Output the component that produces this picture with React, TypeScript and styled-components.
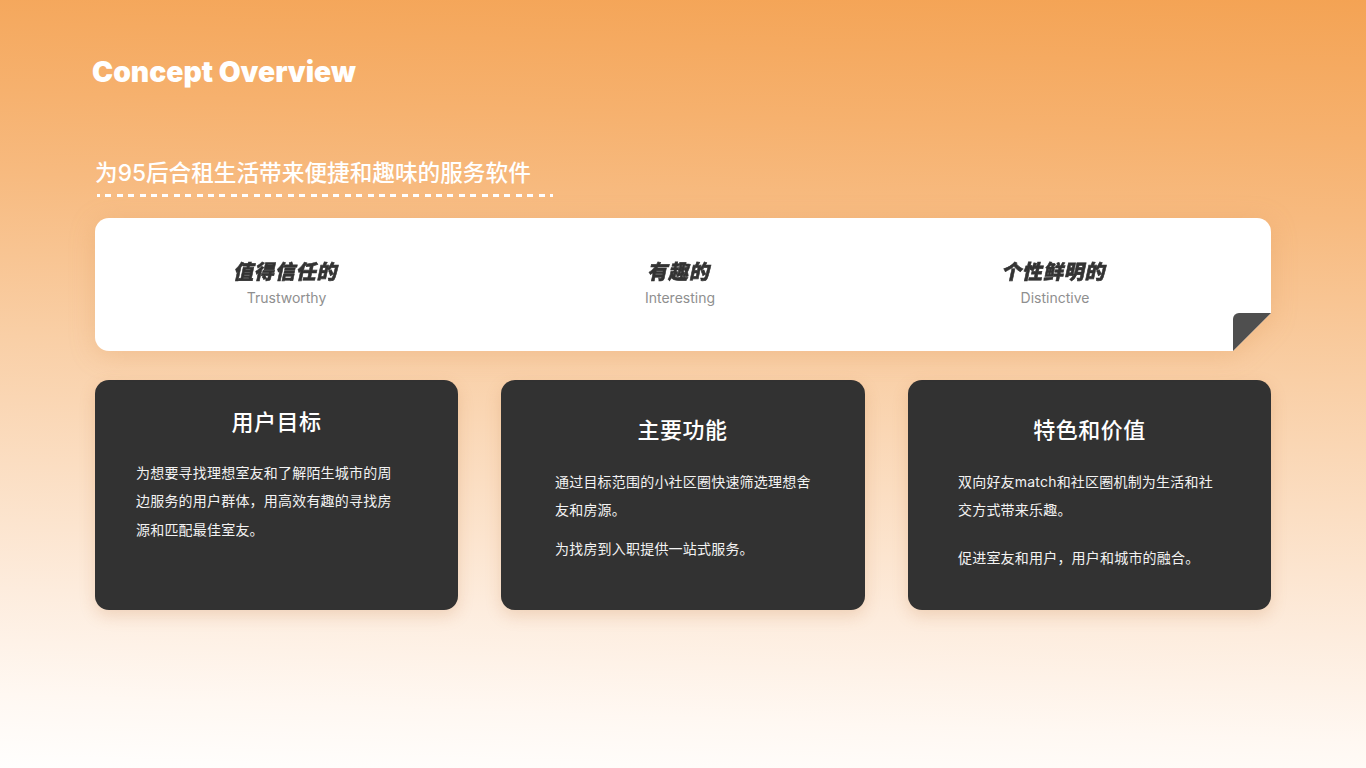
import React from 'react';
import styled, { createGlobalStyle } from 'styled-components';

const GlobalStyle = createGlobalStyle`
  html, body {
    margin: 0;
    padding: 0;
  }
  body {
    font-family: Inter, "Noto Sans CJK SC", sans-serif;
  }
`;

const Page = styled.div`
  box-sizing: border-box;
  width: 1366px;
  height: 768px;
  overflow: hidden;
  padding: 54px 95px 0;
  background: linear-gradient(182deg, #f4a354 0%, #f6b16e 17%, #f7ba7f 27%, #f9cfa6 47%, #fdecdd 78%, #fff8f2 91%, #fffefd 100%);
`;

const Title = styled.h1`
  margin: 0 0 0 -3px;
  font-family: Inter, sans-serif;
  font-size: 28.3px;
  line-height: 36px;
  font-weight: 900;
  color: #ffffff;
`;

const Subtitle = styled.h2`
  width: max-content;
  margin: 66px 0 0;
  font-family: Inter, "Noto Sans CJK SC", sans-serif;
  font-size: 22.65px;
  line-height: 34px;
  font-weight: 500;
  color: #ffffff;
`;

const Dashes = styled.div`
  width: 456px;
  height: 3px;
  margin: 4px 0 0 2px;
  background: repeating-linear-gradient(90deg, #ffffff 0 3px, transparent 3px 8.4px, #ffffff 8.4px 11.4px);
`;

const PanelShadow = styled.div`
  position: relative;
  margin-top: 21px;
  filter: drop-shadow(0 4px 12px rgba(214, 140, 70, 0.25));
`;

const Panel = styled.div`
  display: grid;
  grid-template-columns: 383px 404px 346px;
  height: 133px;
  border-radius: 14px;
  background: #ffffff;
  clip-path: polygon(0 0, 100% 0, 100% 95px, calc(100% - 38px) 100%, 0 100%);
`;

const Fold = styled.div`
  position: absolute;
  right: 0;
  bottom: 0;
  width: 38px;
  height: 38px;
  border-top-left-radius: 6px;
  background: #4f4f4f;
  clip-path: polygon(0 0, 100% 0, 0 100%);
`;

const Trait = styled.div`
  display: flex;
  flex-direction: column;
  align-items: center;
  padding-top: 41px;
`;

const TraitName = styled.div`
  font-family: "Noto Sans CJK SC", sans-serif;
  font-size: 20px;
  line-height: 24px;
  font-weight: 900;
  letter-spacing: 0.8px;
  color: #333333;
  -webkit-text-stroke: 0.6px #333333;
  transform: skewX(-12deg);
`;

const TraitEnglish = styled.div`
  margin-top: 4px;
  font-family: Inter, sans-serif;
  font-size: 14px;
  line-height: 22px;
  color: #8f8f8f;
`;

const Cards = styled.div`
  display: grid;
  grid-template-columns: 363px 364px 363px;
  column-gap: 43px;
  margin-top: 29px;
`;

const Card = styled.section<{ $top: number; $left: number }>`
  box-sizing: border-box;
  height: 230px;
  padding: ${(p) => p.$top}px 40px 0 ${(p) => p.$left}px;
  border-radius: 14px;
  background: #323232;
  box-shadow: 0 6px 16px rgba(190, 120, 60, 0.22);
  color: #ffffff;
`;

const CardTitle = styled.h3<{ $left: number }>`
  margin: 0 0 0 ${(p) => -p.$left}px;
  width: 363px;
  text-align: center;
  font-family: "Noto Sans CJK SC", sans-serif;
  font-size: 22px;
  line-height: 32px;
  font-weight: 500;
  letter-spacing: 0.5px;
`;

const CardText = styled.p<{ $top: number }>`
  margin: ${(p) => p.$top}px 0 0;
  width: 260px;
  font-family: Inter, "Noto Sans CJK SC", sans-serif;
  font-size: 14px;
  line-height: 28.3px;
  letter-spacing: 0.2px;
  color: #f2f2f2;
`;

const traits = [
  { name: '值得信任的', english: 'Trustworthy' },
  { name: '有趣的', english: 'Interesting' },
  { name: '个性鲜明的', english: 'Distinctive' },
];

const cards = [
  {
    title: '用户目标',
    top: 24,
    left: 41,
    paragraphs: [{ top: 23, text: '为想要寻找理想室友和了解陌生城市的周边服务的用户群体，用高效有趣的寻找房源和匹配最佳室友。' }],
  },
  {
    title: '主要功能',
    top: 32,
    left: 54,
    paragraphs: [
      { top: 24, text: '通过目标范围的小社区圈快速筛选理想舍友和房源。' },
      { top: 10, text: '为找房到入职提供一站式服务。' },
    ],
  },
  {
    title: '特色和价值',
    top: 32,
    left: 50,
    paragraphs: [
      { top: 24, text: '双向好友match和社区圈机制为生活和社交方式带来乐趣。' },
      { top: 19, text: '促进室友和用户，用户和城市的融合。' },
    ],
  },
];

export default function App() {
  return (
    <Page>
      <GlobalStyle />
      <Title>Concept Overview</Title>
      <Subtitle>为95后合租生活带来便捷和趣味的服务软件</Subtitle>
      <Dashes />
      <PanelShadow>
        <Panel>
          {traits.map((t) => (
            <Trait key={t.english}>
              <TraitName>{t.name}</TraitName>
              <TraitEnglish>{t.english}</TraitEnglish>
            </Trait>
          ))}
        </Panel>
        <Fold />
      </PanelShadow>
      <Cards>
        {cards.map((c) => (
          <Card key={c.title} $top={c.top} $left={c.left}>
            <CardTitle $left={c.left}>{c.title}</CardTitle>
            {c.paragraphs.map((p) => (
              <CardText key={p.text} $top={p.top}>
                {p.text}
              </CardText>
            ))}
          </Card>
        ))}
      </Cards>
    </Page>
  );
}
